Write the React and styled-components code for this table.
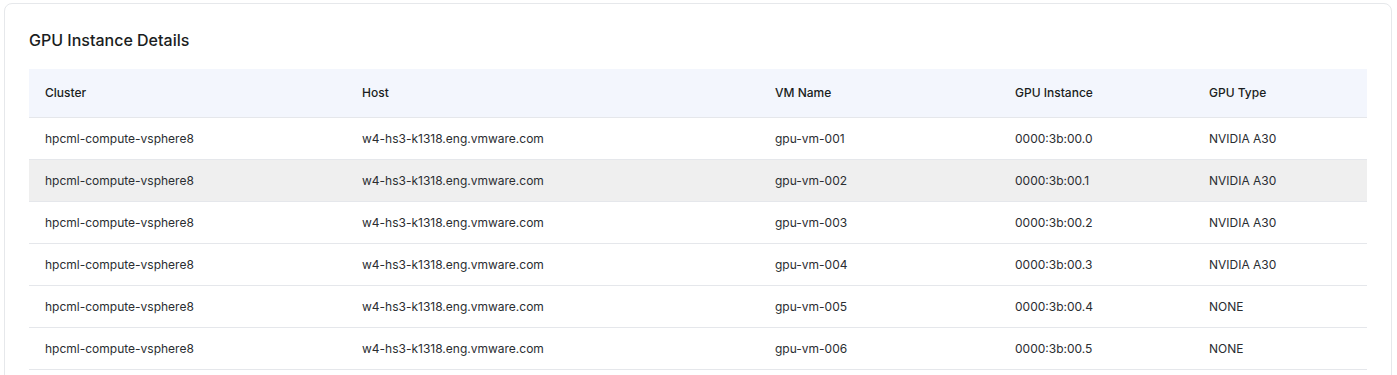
import React from "react";
import styled, { createGlobalStyle } from "styled-components";

const GlobalStyle = createGlobalStyle`
  * { box-sizing: border-box; }
  body {
    margin: 0;
    padding: 3px 5px 0 4px;
    background: #ffffff;
    font-family: Inter, "Noto Sans", sans-serif;
    color: #1f2328;
  }
`;

const Card = styled.section`
  border: 1px solid #e6e8eb;
  border-radius: 8px;
  background: #fff;
  padding: 24px 24px 24px;
`;

const Title = styled.h2`
  margin: 0 0 17px;
  font-size: 16px;
  line-height: 24px;
  font-weight: 500;
  color: #1a1d21;
`;

const Table = styled.table`
  width: 100%;
  border-collapse: collapse;
  table-layout: fixed;
  font-size: 12px;
`;

const HeadCell = styled.th`
  width: ${({ $w }) => $w || "auto"};
  height: 48px;
  padding: 0 16px;
  text-align: left;
  font-weight: 500;
  color: #1a1d21;
  background: #f3f6fd;
  border-bottom: 1px solid #e5e7eb;
`;

const Row = styled.tr`
  background: ${({ $hover }) => ($hover ? "#efefef" : "#fff")};
`;

const Cell = styled.td`
  height: 42.17px;
  padding: 0 16px;
  color: #2a2d31;
  border-bottom: 1px solid #e5e7eb;
  white-space: nowrap;
`;

const columns = [
  { label: "Cluster", w: "317px" },
  { label: "Host", w: "413px" },
  { label: "VM Name", w: "240px" },
  { label: "GPU Instance", w: "194px" },
  { label: "GPU Type" },
];

const rows = [
  ["gpu-vm-001", "0000:3b:00.0", "NVIDIA A30"],
  ["gpu-vm-002", "0000:3b:00.1", "NVIDIA A30"],
  ["gpu-vm-003", "0000:3b:00.2", "NVIDIA A30"],
  ["gpu-vm-004", "0000:3b:00.3", "NVIDIA A30"],
  ["gpu-vm-005", "0000:3b:00.4", "NONE"],
  ["gpu-vm-006", "0000:3b:00.5", "NONE"],
];

export default function App() {
  return (
    <>
      <GlobalStyle />
      <Card>
        <Title>GPU Instance Details</Title>
        <Table>
          <thead>
            <tr>
              {columns.map((c) => (
                <HeadCell key={c.label} $w={c.w}>
                  {c.label}
                </HeadCell>
              ))}
            </tr>
          </thead>
          <tbody>
            {rows.map(([vm, inst, type], i) => (
              <Row key={vm} $hover={i === 1}>
                <Cell>hpcml-compute-vsphere8</Cell>
                <Cell>w4-hs3-k1318.eng.vmware.com</Cell>
                <Cell>{vm}</Cell>
                <Cell>{inst}</Cell>
                <Cell>{type}</Cell>
              </Row>
            ))}
          </tbody>
        </Table>
      </Card>
    </>
  );
}
